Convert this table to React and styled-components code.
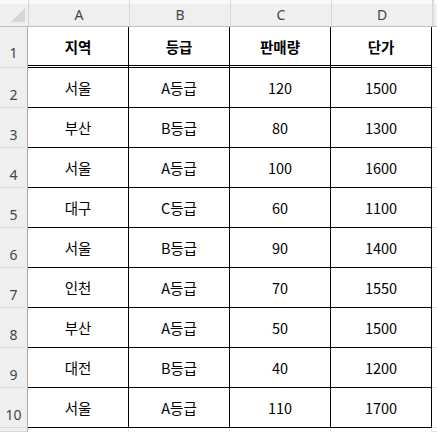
import React from 'react';
import styled, { createGlobalStyle } from 'styled-components';

const GlobalStyle = createGlobalStyle`
  html, body {
    margin: 0;
    padding: 0;
    background: #ffffff;
  }
  body {
    font-family: "Noto Sans CJK KR", "Noto Sans", sans-serif;
  }
`;

const COLUMNS = ['A', 'B', 'C', 'D'];

const DATA = [
  ['지역', '등급', '판매량', '단가'],
  ['서울', 'A등급', '120', '1500'],
  ['부산', 'B등급', '80', '1300'],
  ['서울', 'A등급', '100', '1600'],
  ['대구', 'C등급', '60', '1100'],
  ['서울', 'B등급', '90', '1400'],
  ['인천', 'A등급', '70', '1550'],
  ['부산', 'A등급', '50', '1500'],
  ['대전', 'B등급', '40', '1200'],
  ['서울', 'A등급', '110', '1700'],
];

const App = () => {
  return (
    <>
      <GlobalStyle />
      <Sheet>
        <HeaderRow>
          <Corner>
            <CornerMark />
          </Corner>
          {COLUMNS.map((c) => (
            <ColHead key={c}>{c}</ColHead>
          ))}
          <ColHeadRest />
        </HeaderRow>

        {DATA.map((row, i) => (
          <Row key={i}>
            <RowHead $tall={i === 0}>{i + 1}</RowHead>
            {row.map((value, j) => (
              <Cell key={j} $head={i === 0}>
                {value}
              </Cell>
            ))}
            <RestCell />
          </Row>
        ))}

        {/* row 11 only peeks in at the bottom edge */}
        <Row $fill>
          <RowHead />
          {COLUMNS.map((c) => (
            <EmptyCell key={c} />
          ))}
          <RestCell />
        </Row>
      </Sheet>
    </>
  );
};

const Sheet = styled.div`
  width: 437px;
  height: 432px;
  overflow: hidden;
  display: flex;
  flex-direction: column;
  background: #ffffff;
`;

const HeaderRow = styled.div`
  display: flex;
  height: 26px;
  flex-shrink: 0;
  background: linear-gradient(#f9f9f9 0 4px, #efefef 4px);
  border-bottom: 1px solid #bfbfbf;
`;

const Corner = styled.div`
  position: relative;
  width: 28px;
  border-right: 1px solid #d4d4d4;
`;

/* little grey triangle in the select-all corner */
const CornerMark = styled.div`
  position: absolute;
  right: 3px;
  bottom: 4px;
  width: 0;
  height: 0;
  border-left: 14px solid transparent;
  border-bottom: 14px solid #d6d6d6;
`;

const ColHead = styled.div`
  width: 100px;
  border-right: 1px solid #d9d9d9;
  display: flex;
  align-items: center;
  justify-content: center;
  padding-top: 3px;
  box-sizing: content-box;
  font-family: "Noto Sans", "Liberation Sans", sans-serif;
  font-size: 14px;
  color: #454545;
`;

const ColHeadRest = styled.div`
  flex: 1;
  border-left: 1px solid #d9d9d9;
`;

const Row = styled.div`
  display: flex;
  flex-shrink: 0;
  ${(p) => p.$fill && 'flex: 1;'}
`;

const RowHead = styled.div`
  width: 28px;
  flex-shrink: 0;
  background: #efefef;
  border-right: 1px solid #ababab;
  border-bottom: 1px solid #d9d9d9;
  display: flex;
  align-items: flex-end;
  justify-content: center;
  padding-bottom: ${(p) => (p.$tall ? '5px' : '3px')};
  box-sizing: border-box;
  font-family: "Noto Sans", "Liberation Sans", sans-serif;
  font-size: 14px;
  color: #454545;
`;

const Cell = styled.div`
  width: 100px;
  height: ${(p) => (p.$head ? '38px' : '39px')};
  flex-shrink: 0;
  display: flex;
  align-items: center;
  justify-content: center;
  border-right: 1px solid #000;
  border-bottom: ${(p) => (p.$head ? '3px double #000' : '1px solid #000')};
  font-size: 14.5px;
  font-weight: ${(p) => (p.$head ? 700 : 400)};
  color: #000;
`;

const EmptyCell = styled.div`
  width: 100px;
  flex-shrink: 0;
  border-right: 1px solid #e1e1e1;
`;

const RestCell = styled.div`
  flex: 1;
  border-bottom: 1px solid #e1e1e1;
`;

export default App;
